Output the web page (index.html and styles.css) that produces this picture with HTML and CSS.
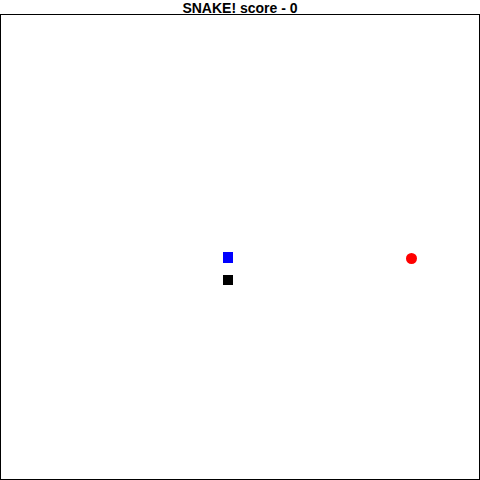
FILE: index.html
```html
<!DOCTYPE html>
<html lang="en">
<head>
    <meta charset="UTF-8">
    <meta name="viewport" content="width=device-width, initial-scale=1.0">
    <title>Snake</title>
    <link rel="stylesheet" href="styles.css">
</head>
<body>

    <h1 class="title">SNAKE! score - <span id="score">0</span></h1>
    <div class="board">
        <div class="cell head"></div>
        <div class="cell tail"></div>
        <div class="food"></div>
    </div>

</body>
</html>
```
FILE: styles.css
```css
body {
    margin: 0;
    font-family: "Liberation Sans", Arial, sans-serif;
    background: white;
}
.title {
    margin: 0;
    height: 14px;
    font-size: 14px;
    line-height: 16px;
    font-weight: bold;
    text-align: center;
    color: black;
}
.board {
    position: relative;
    box-sizing: border-box;
    width: 480px;
    height: 466px;
    border: 1px solid black;
}
.cell {
    position: absolute;
    width: 10px;
    height: 11px;
}
.head {
    left: 222px;
    top: 237px;
    background: blue;
}
.tail {
    left: 222px;
    top: 260px;
    height: 10px;
    background: black;
}
.food {
    position: absolute;
    left: 405px;
    top: 238px;
    width: 11px;
    height: 11px;
    border-radius: 50%;
    background: red;
}
```
